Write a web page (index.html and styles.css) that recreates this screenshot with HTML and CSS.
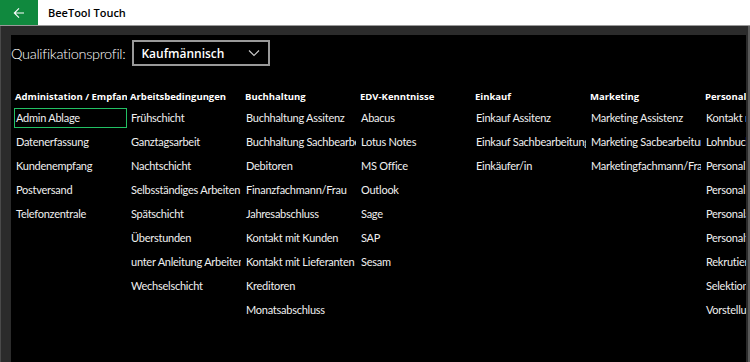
FILE: index.html
```html
<!DOCTYPE html>
<html lang="de">
<head>
<meta charset="utf-8">
<title>BeeTool Touch</title>
<link rel="stylesheet" href="styles.css">
</head>
<body>
<div class="titlebar">
  <div class="back">
    <svg width="12" height="12" viewBox="0 0 12 12"><path d="M11 6H1.5M6 1.3L1.3 6 6 10.7" fill="none" stroke="#fff" stroke-width="1.1"/></svg>
  </div>
  <div class="title">BeeTool Touch</div>
</div>
<div class="frame">
  <div class="content">
    <div class="profile">
      <span class="label">Qualifikationsprofil:</span>
      <div class="select">
        <span>Kaufmännisch</span>
        <svg width="12" height="8" viewBox="0 0 12 8"><path d="M1 1.5l5 5 5-5" fill="none" stroke="#ccc" stroke-width="1.1"/></svg>
      </div>
    </div>
    <div class="columns">
      <div class="col">
        <div class="head">Administation / Empfang</div>
        <div class="item focus">Admin Ablage</div>
        <div class="item">Datenerfassung</div>
        <div class="item">Kundenempfang</div>
        <div class="item">Postversand</div>
        <div class="item">Telefonzentrale</div>
      </div>
      <div class="col">
        <div class="head">Arbeitsbedingungen</div>
        <div class="item">Frühschicht</div>
        <div class="item">Ganztagsarbeit</div>
        <div class="item">Nachtschicht</div>
        <div class="item">Selbsständiges Arbeiten</div>
        <div class="item">Spätschicht</div>
        <div class="item">Überstunden</div>
        <div class="item">unter Anleitung Arbeiten</div>
        <div class="item">Wechselschicht</div>
      </div>
      <div class="col">
        <div class="head">Buchhaltung</div>
        <div class="item">Buchhaltung Assitenz</div>
        <div class="item">Buchhaltung Sachbearbeitung</div>
        <div class="item">Debitoren</div>
        <div class="item">Finanzfachmann/Frau</div>
        <div class="item">Jahresabschluss</div>
        <div class="item">Kontakt mit Kunden</div>
        <div class="item">Kontakt mit Lieferanten</div>
        <div class="item">Kreditoren</div>
        <div class="item">Monatsabschluss</div>
      </div>
      <div class="col">
        <div class="head">EDV-Kenntnisse</div>
        <div class="item">Abacus</div>
        <div class="item">Lotus Notes</div>
        <div class="item">MS Office</div>
        <div class="item">Outlook</div>
        <div class="item">Sage</div>
        <div class="item">SAP</div>
        <div class="item">Sesam</div>
      </div>
      <div class="col">
        <div class="head">Einkauf</div>
        <div class="item">Einkauf Assitenz</div>
        <div class="item">Einkauf Sachbearbeitung</div>
        <div class="item">Einkäufer/in</div>
      </div>
      <div class="col">
        <div class="head">Marketing</div>
        <div class="item">Marketing Assistenz</div>
        <div class="item">Marketing Sacbearbeitung</div>
        <div class="item">Marketingfachmann/Frau</div>
      </div>
      <div class="col">
        <div class="head">Personalwesen</div>
        <div class="item">Kontakt mit Bewerbern</div>
        <div class="item">Lohnbuchhaltung</div>
        <div class="item">Personal Administration</div>
        <div class="item">Personal Sachbearbeitung</div>
        <div class="item">Personalassistenz</div>
        <div class="item">Personalfachmann/Frau</div>
        <div class="item">Rekrutierung</div>
        <div class="item">Selektionierung</div>
        <div class="item">Vorstellungsgespräche</div>
      </div>
    </div>
  </div>
</div>
</body>
</html>
```
FILE: styles.css
```css
* { box-sizing: border-box; }
html, body { margin: 0; padding: 0; height: 100%; overflow: hidden; }
body {
  font-family: Lato, "Open Sans", sans-serif;
  background: #000;
  color: #fff;
  display: flex;
  flex-direction: column;
}
.titlebar {
  height: 26px;
  flex: none;
  background: #fff;
  border-bottom: 1px solid #9a9a9a;
  display: flex;
  align-items: stretch;
}
.back {
  width: 38px;
  background: #10893e;
  display: flex;
  align-items: center;
  justify-content: center;
}
.title {
  color: #000;
  font-family: "Open Sans", sans-serif;
  font-size: 11px;
  font-weight: 600;
  padding-left: 10px;
  display: flex;
  align-items: center;
}
.frame {
  flex: 1;
  background: #2b2b2b;
  padding: 9px 2px 0 10px;
  border-left: 1px solid #4a4a4a;
  border-right: 2px solid #5a5a5a;
  display: flex;
  min-height: 0;
}
.content {
  flex: 1;
  background: #000;
  overflow: hidden;
  padding: 5px 0 0 0;
}
.profile {
  display: flex;
  align-items: center;
  gap: 7px;
  height: 26px;
}
.label {
  font-size: 14.5px;
  font-weight: 300;
  letter-spacing: -0.3px;
  color: #fff;
}
.select {
  width: 138px;
  height: 26px;
  border: 2px solid #999;
  display: flex;
  align-items: center;
  justify-content: space-between;
  padding: 0 8px 0 7px;
  font-family: "Open Sans", sans-serif;
  font-size: 12px;
  font-weight: 600;
}
.columns {
  display: flex;
  padding: 24px 0 0 3px;
}
.col {
  width: 115px;
  flex: none;
  display: flex;
  flex-direction: column;
}
.head {
  font-family: "Open Sans", sans-serif;
  font-size: 9.5px;
  font-weight: 700;
  height: 14px;
  line-height: 14px;
  padding-left: 1px;
  white-space: nowrap;
  overflow: hidden;
  width: 113px;
}
.item {
  font-family: Lato, sans-serif;
  font-size: 11px;
  letter-spacing: -0.25px;
  height: 20px;
  line-height: 18px;
  margin-top: 4px;
  padding-left: 1px;
  white-space: nowrap;
  overflow: hidden;
  width: 113px;
  color: #f0f0f0;
  border: 1px solid transparent;
}
.item.focus {
  border-color: #22c064;
}
```
